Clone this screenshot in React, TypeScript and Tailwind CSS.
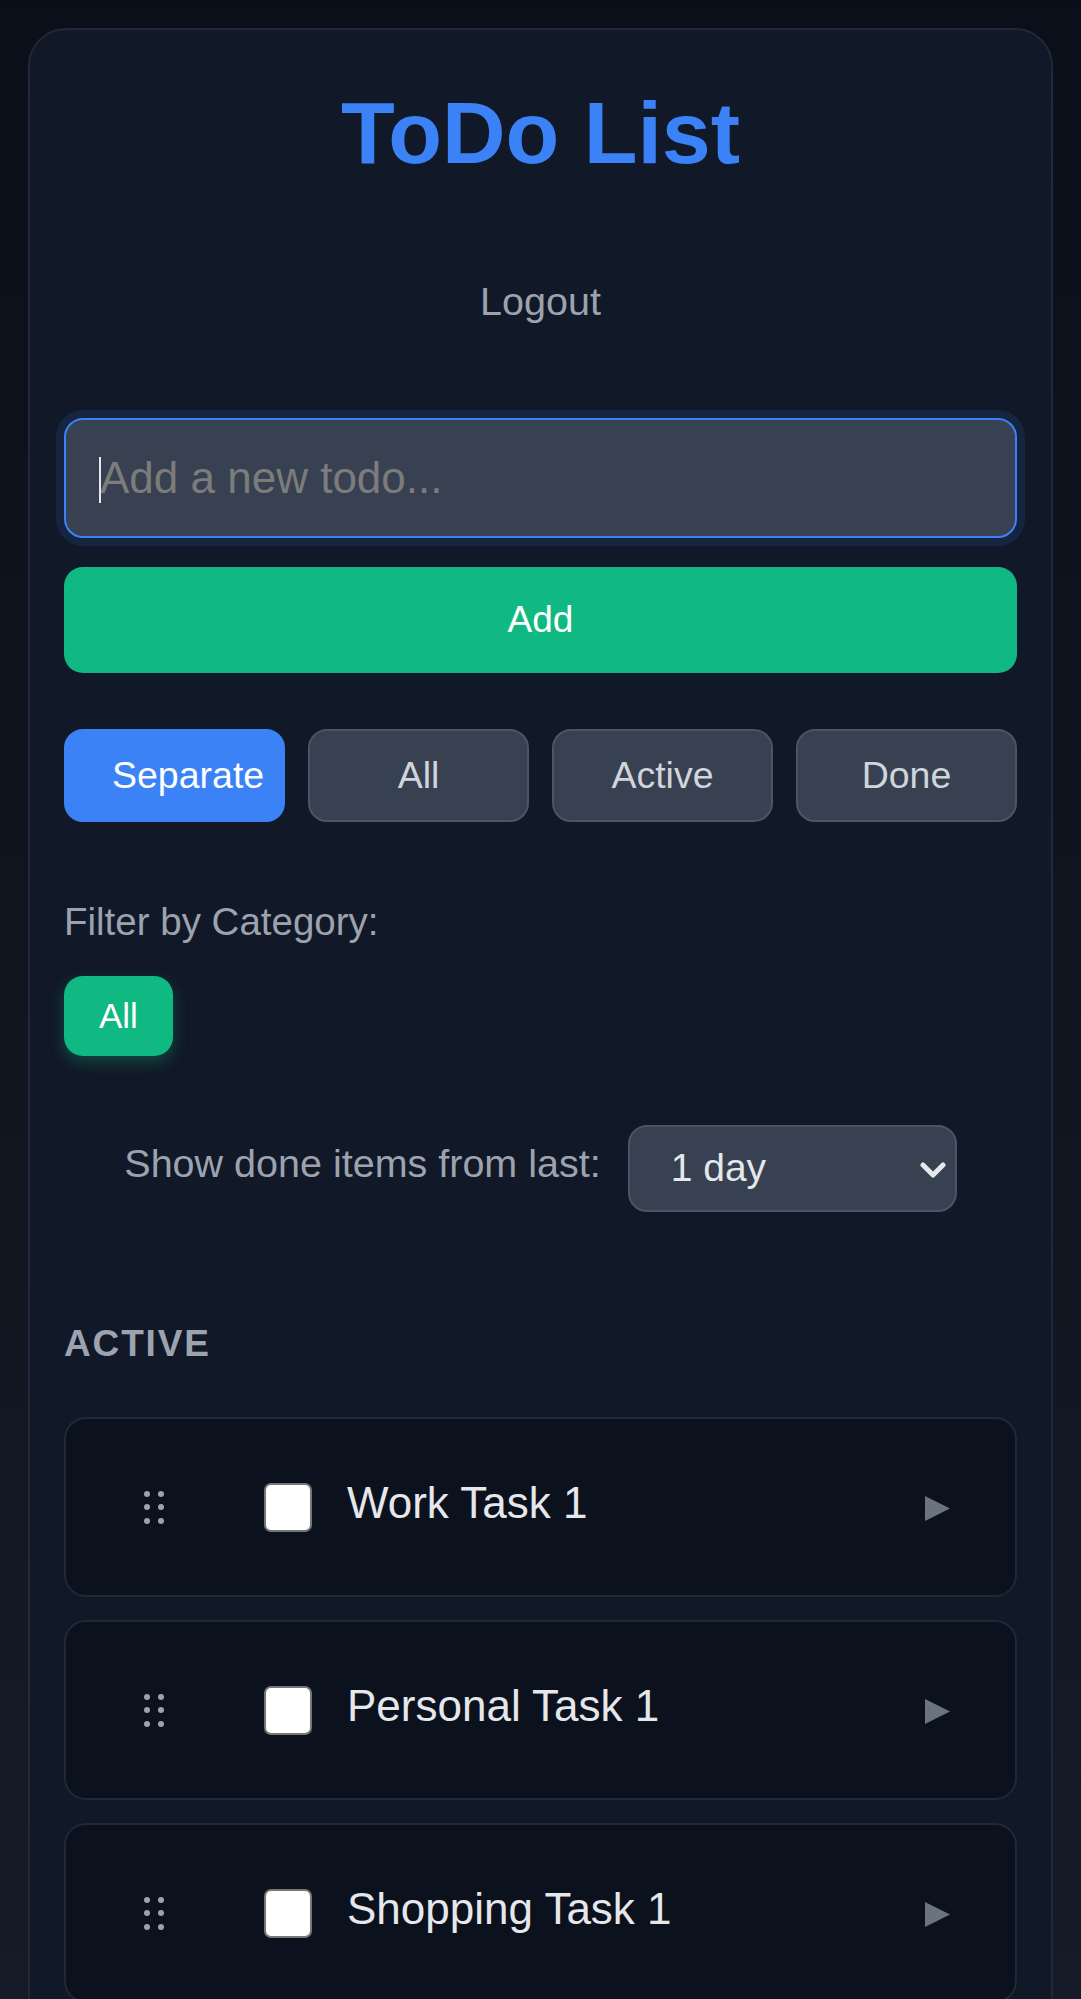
import React from 'react'

type TaskProps = {
  title: string;
}

function DragHandle() {
  return (
    <div className="grid grid-cols-2 gap-x-[7.5px] gap-y-[7.5px] w-[20px]">
      {[0, 1, 2, 3, 4, 5].map((i) => (
        <span key={i} className="block w-[6px] h-[6px] rounded-full bg-[#9ca3af]" />
      ))}
    </div>
  )
}

function TaskItem({ title }: TaskProps) {
  return (
    <div className="h-[180px] rounded-[22px] border-2 border-[#1f2937] bg-[#0b111d] flex items-center pl-[78px] pr-[65px]">
      <DragHandle />
      <div className="ml-[100px] w-[48px] h-[49px] shrink-0 rounded-[7px] border-[2.5px] border-[#767676] bg-white" />
      <p className="ml-[35px] flex-1 pb-[9px] text-[44px] leading-[50px] text-[#e5e7eb]">{title}</p>
      <svg width="25" height="25" viewBox="0 0 25 25" className="mt-[3px]">
        <polygon points="0,0 25,12.5 0,25" fill="#6b7280" />
      </svg>
    </div>
  )
}

function App() {
  const tabs = ['Separate', 'All', 'Active', 'Done'];
  const tasks = ['Work Task 1', 'Personal Task 1', 'Shopping Task 1'];

  return (
    <div className="min-h-screen bg-linear-to-b from-[#0b0f19] to-[#161b27] pt-[28px] px-[28px] font-['Liberation_Sans',Arial,sans-serif]">
      <div className="rounded-[38px] border-2 border-[#1f2937] bg-[#111827] px-[34px] pt-[34px] pb-[40px]">
        <h1 className="mt-[18px] text-center text-[88px] leading-[102px] font-bold text-[#3b82f6]">ToDo List</h1>

        <div className="mt-[94px] flex justify-center">
          <button className="text-[39.5px] leading-[46px] text-[#9ca3af]">Logout</button>
        </div>

        <div className="relative mt-[94px]">
          <input
            className="block h-[120px] w-full rounded-[19px] border-2 border-[#3b82f6] bg-[#374151] px-[34px] text-[44px] text-white placeholder:text-[#7c7c7c] outline-none shadow-[0_0_0_8px_rgba(59,130,246,0.12)]"
            placeholder="Add a new todo..."
          />
          <span className="absolute left-[35px] top-[39px] h-[46px] w-[2px] bg-[#e5e7eb]" />
        </div>

        <button className="mt-[29px] block h-[106px] w-full rounded-[19px] bg-[#10b981] text-[37px] text-white">Add</button>

        <div className="mt-[56px] grid grid-cols-4 gap-[23px]">
          {tabs.map((tab) => (
            <button
              key={tab}
              className={
                tab === 'Separate'
                  ? 'h-[93px] rounded-[19px] border-2 border-[#3b82f6] bg-[#3b82f6] px-[46px] text-[37.5px] whitespace-nowrap text-white'
                  : 'h-[93px] rounded-[19px] border-2 border-[#4b5563] bg-[#374151] px-[46px] text-[37.5px] whitespace-nowrap text-[#d1d5db]'
              }
            >
              {tab}
            </button>
          ))}
        </div>

        <p className="mt-[78px] text-[38.5px] leading-[44px] text-[#9ca3af]">Filter by Category:</p>
        <div className="mt-[32px] flex">
          <button className="h-[80px] rounded-[19px] bg-[#10b981] px-[35px] text-[35px] text-white shadow-[0_6px_16px_rgba(16,185,129,0.3)]">All</button>
        </div>

        <div className="mt-[69px] flex justify-center items-start gap-[27px]">
          <label className="mt-[16px] text-[39.5px] leading-[45px] text-[#9ca3af]">Show done items from last:</label>
          <div className="relative w-[329px] h-[87px]">
            <select className="h-full w-full appearance-none rounded-[19px] border-2 border-[#4b5563] bg-[#374151] pl-[41px] text-[39px] text-[#e5e7eb] outline-none">
              <option>1 day</option>
              <option>3 days</option>
              <option>1 week</option>
            </select>
            <svg className="absolute right-[11px] top-[36px]" width="26" height="18" viewBox="0 0 26 18">
              <polyline points="3,4 13,14 23,4" fill="none" stroke="#e5e7eb" strokeWidth="5" strokeLinecap="round" strokeLinejoin="round" />
            </svg>
          </div>
        </div>

        <h2 className="mt-[110px] text-[37px] leading-[43px] font-bold tracking-[0.05em] uppercase text-[#9ca3af]">Active</h2>

        <div className="mt-[52px] flex flex-col gap-[23px]">
          {tasks.map((t) => (
            <TaskItem key={t} title={t} />
          ))}
        </div>
      </div>
    </div>
  )
}

export default App
